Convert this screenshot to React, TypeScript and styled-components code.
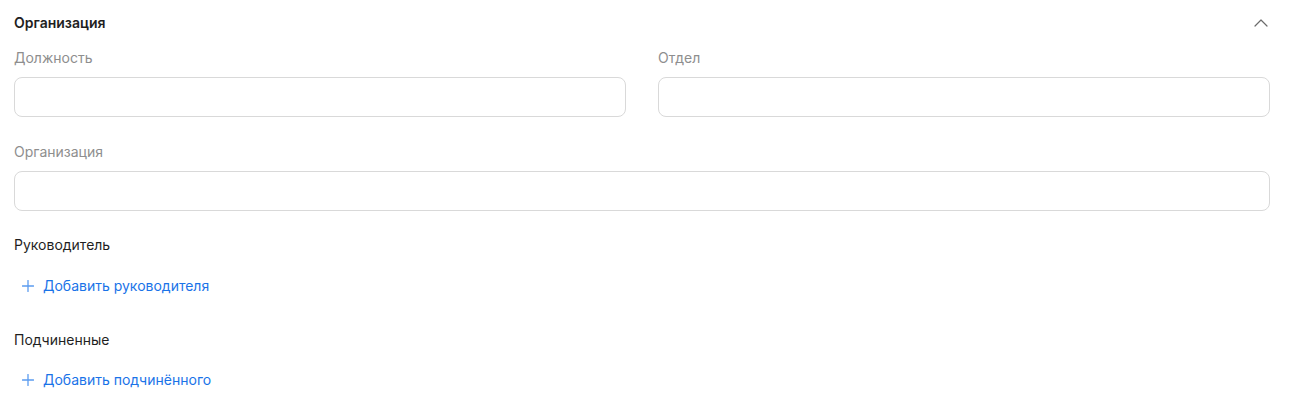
import React from "react";
import styled, { createGlobalStyle } from "styled-components";

const Global = createGlobalStyle`
  html, body { margin: 0; padding: 0; background: #fff; }
  body { font-family: Inter, "Noto Sans", sans-serif; -webkit-font-smoothing: antialiased; }
  * { box-sizing: border-box; }
`;

const Section = styled.section`
  padding: 13px 19px 0 14px;
  display: flex;
  flex-direction: column;
`;

const Header = styled.div`
  display: flex;
  align-items: center;
  justify-content: space-between;
  height: 20px;
`;

const Title = styled.h3`
  margin: 0;
  font-size: 14px;
  line-height: 20px;
  font-weight: 600;
  color: #1f1f1f;
`;

const Toggle = styled.button`
  border: 0;
  background: none;
  padding: 0;
  width: 16px;
  height: 16px;
  margin-right: 1px;
  display: flex;
  align-items: center;
  justify-content: center;
  color: #6b6b6b;
  cursor: pointer;
`;

const Grid = styled.div`
  display: grid;
  grid-template-columns: 1fr 1fr;
  column-gap: 32px;
  margin-top: 15px;
`;

const Field = styled.label<{ $top?: number }>`
  display: flex;
  flex-direction: column;
  margin-top: ${(p) => p.$top ?? 0}px;
`;

const FieldLabel = styled.span`
  font-size: 14px;
  line-height: 20px;
  color: #8e8e8e;
  margin-bottom: 9px;
`;

const Input = styled.input`
  height: 40px;
  border: 1px solid #d9d9d9;
  border-radius: 8px;
  padding: 0 12px;
  font: inherit;
  font-size: 14px;
  outline: none;
  background: #fff;
`;

const GroupTitle = styled.div<{ $top: number }>`
  font-size: 14px;
  line-height: 20px;
  color: #1f1f1f;
  margin-top: ${(p) => p.$top}px;
`;

const AddButton = styled.button<{ $top: number }>`
  align-self: flex-start;
  display: flex;
  align-items: center;
  gap: 9px;
  border: 0;
  background: none;
  padding: 0 0 0 8px;
  margin-top: ${(p) => p.$top}px;
  font-family: inherit;
  font-size: 14px;
  line-height: 20px;
  color: #1a73e8;
  cursor: pointer;
`;

const PlusIcon = () => (
  <svg width="12" height="12" viewBox="0 0 12 12" fill="none">
    <path d="M6 0.5V11.5M0.5 6H11.5" stroke="#5b9cf0" strokeWidth="1.3" strokeLinecap="round" />
  </svg>
);

const ChevronUp = () => (
  <svg width="14" height="8" viewBox="0 0 14 8" fill="none">
    <path d="M1 7L7 1L13 7" stroke="currentColor" strokeWidth="1.2" strokeLinecap="round" strokeLinejoin="round" />
  </svg>
);

export default function App() {
  return (
    <>
      <Global />
      <Section>
        <Header>
          <Title>Организация</Title>
          <Toggle aria-label="Свернуть">
            <ChevronUp />
          </Toggle>
        </Header>
        <Grid>
          <Field>
            <FieldLabel>Должность</FieldLabel>
            <Input />
          </Field>
          <Field>
            <FieldLabel>Отдел</FieldLabel>
            <Input />
          </Field>
        </Grid>
        <Field $top={25}>
          <FieldLabel>Организация</FieldLabel>
          <Input />
        </Field>
        <GroupTitle $top={24}>Руководитель</GroupTitle>
        <AddButton $top={21}>
          <PlusIcon />
          Добавить руководителя
        </AddButton>
        <GroupTitle $top={34}>Подчиненные</GroupTitle>
        <AddButton $top={20}>
          <PlusIcon />
          Добавить подчинённого
        </AddButton>
      </Section>
    </>
  );
}
